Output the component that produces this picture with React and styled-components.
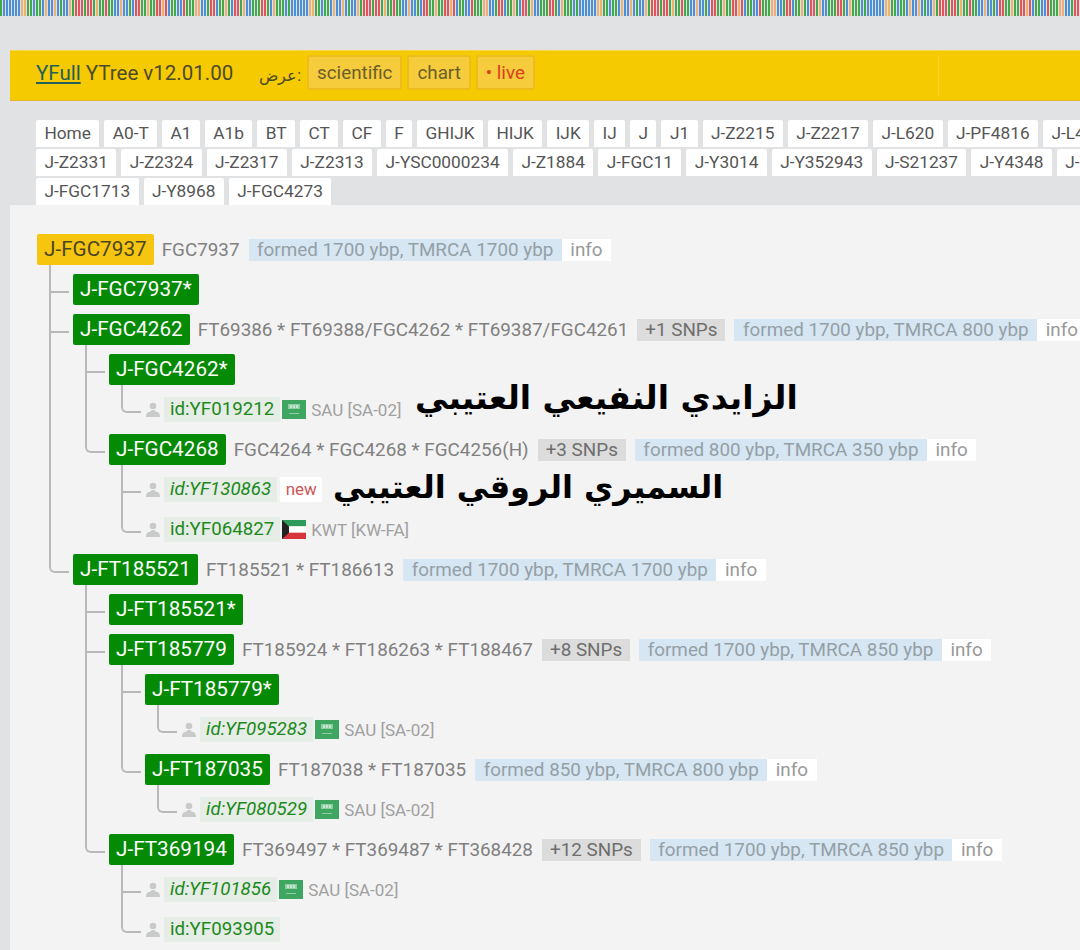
import React from 'react'
import styled, { createGlobalStyle } from 'styled-components'

const GlobalStyle = createGlobalStyle`
html, body {
    margin: 0;
    padding: 0;
    background: #e0e2e3;
    font-family: Roboto, "Liberation Sans", sans-serif;
    overflow-x: hidden;
}
`

const sequence = 'GBBBBBBOOGGBGGBOBBOBGBBOGRRRGRRGOGGRGGBBOBBGBRRGGOGGRRORBGGBBRGGGOOBBGRRBGGOGBRRGOBBGGGRRGBOGGGB'
const stripeColors = { B: '#4a8fd8', G: '#43a84a', R: '#e0545a', O: '#efae72' }
const stripes = sequence.split('').map((c, i) => (
    `${stripeColors[c]} ${i * 3}px ${i * 3 + 2}px, #e0e2e3 ${i * 3 + 2}px ${i * 3 + 3}px`
)).join(', ')

const Page = styled.div`
position: relative;
width: 1080px;
height: 950px;
overflow: hidden;
`

const Strip = styled.div`
height: 16px;
background: repeating-linear-gradient(90deg, ${stripes});
`

const Header = styled.header`
margin: 34px 0 0 10px;
height: 51px;
box-sizing: border-box;
background: #f6ca00;
border-top: 1px solid #f7d64a;
border-bottom: 1px solid #e2b430;
display: flex;
align-items: center;
padding: 0 0 6px 26px;
color: #4d4a2a;
font-size: 20.5px;
`

const Title = styled.div`
margin-right: 26px;
a {
    color: #22605c;
    text-decoration: underline;
}
`

const ViewLabel = styled.span`
font-size: 16px;
margin: 5px 6px 0 0;
`

const ViewButton = styled.span`
height: 35px;
box-sizing: border-box;
display: flex;
align-items: center;
padding: 0 8px;
margin-right: 5px;
font-size: 18.8px;
background: #f6cb3c;
border: 2px solid #eebc1c;
border-radius: 3px;
color: ${props => (props.live ? '#d8401c' : '#6b5f2a')};
`

const HeaderDivider = styled.span`
margin: 6px 141px 0 auto;
width: 1px;
height: 41px;
background: #f8d428;
`

const Nav = styled.nav`
display: flex;
flex-wrap: wrap;
gap: 1.5px 5px;
width: 1140px;
padding: 19px 0 0 36px;
height: 85px;
box-sizing: content-box;
`

const Pill = styled.span`
height: 27px;
box-sizing: border-box;
background: #fff;
border-radius: 2px 2px 0 0;
padding: 0 8.4px;
font-size: 17.3px;
line-height: 27px;
color: #555;
white-space: nowrap;
`

const Content = styled.main`
margin-left: 10px;
background: #f3f3f3;
padding: 29px 0 0 27px;
height: 745px;
box-sizing: border-box;
`

const Row = styled.div`
display: flex;
align-items: center;
height: 31px;
white-space: nowrap;
`

const Node = styled.span`
height: 31px;
box-sizing: border-box;
padding: 0 7px;
font-size: 20.7px;
line-height: 31px;
border-radius: 2px;
color: ${props => (props.root ? '#4a4520' : '#fff')};
background: ${props => (props.root ? '#f6c510' : '#058a05')};
margin-right: 8px;
`

const Snps = styled.span`
font-size: 18.85px;
color: #808080;
margin-right: 9px;
`

const Count = styled.span`
font-size: 18.85px;
color: #6e6e6e;
background: #dcdcdc;
padding: 0 8px;
line-height: 22px;
margin-right: 9px;
`

const Age = styled.span`
font-size: 18.85px;
color: #959fa6;
background: #d6e6f2;
padding: 0 8.5px;
line-height: 22px;
`

const Info = styled.span`
font-size: 18.85px;
color: #999;
background: #fff;
padding: 0 8.5px;
line-height: 22px;
`

const List = styled.ul`
list-style: none;
margin: 0;
padding: 0 0 0 36px;
`

const Item = styled.li`
position: relative;
margin-top: 9px;
&::before {
    content: '';
    position: absolute;
    left: -24px;
    top: -9px;
    width: 20px;
    height: 28px;
    box-sizing: border-box;
    border-left: 2px solid #b9b9b9;
    border-bottom: 2px solid #b9b9b9;
    border-bottom-left-radius: ${props => (props.last ? '6px' : '0')};
}
&::after {
    content: '';
    display: ${props => (props.last ? 'none' : 'block')};
    position: absolute;
    left: -24px;
    top: 0;
    bottom: -9px;
    width: 2px;
    background: #b9b9b9;
}
`

const PersonIcon = styled.svg`
width: 14px;
height: 15px;
margin: 0 4px 0 1px;
flex: none;
`

const Sample = styled.span`
font-size: 18.7px;
line-height: 25px;
padding: 0 6px;
background: #e6ece6;
color: #1a8a1a;
font-style: ${props => (props.fresh ? 'italic' : 'normal')};
`

const FlagIcon = styled.svg`
width: 24px;
height: 19px;
margin: 0 5px 0 2px;
flex: none;
`

const Country = styled.span`
font-size: 17px;
color: #a0a0a0;
`

const New = styled.span`
font-size: 17px;
line-height: 25px;
padding: 0 5.5px;
margin-left: 3px;
background: #fff;
color: #cc5555;
`

const Note = styled.div`
position: absolute;
left: ${props => props.left}px;
top: ${props => props.top}px;
direction: rtl;
font-family: "DejaVu Sans", sans-serif;
font-weight: bold;
font-size: ${props => props.size}px;
line-height: 44px;
color: #000;
white-space: nowrap;
`

const navPills = [
    'Home', 'A0-T', 'A1', 'A1b', 'BT', 'CT', 'CF', 'F', 'GHIJK', 'HIJK', 'IJK', 'IJ', 'J', 'J1',
    'J-Z2215', 'J-Z2217', 'J-L620', 'J-PF4816', 'J-L483',
    'J-Z2331', 'J-Z2324', 'J-Z2317', 'J-Z2313', 'J-YSC0000234', 'J-Z1884', 'J-FGC11', 'J-Y3014',
    'J-Y352943', 'J-S21237', 'J-Y4348', 'J-Y3712',
    'J-FGC1713', 'J-Y8968', 'J-FGC4273',
]

const Person = () => (
    <PersonIcon viewBox="0 0 14 15">
        <circle cx="7" cy="4" r="3.3" fill="#c9caca" />
        <path d="M5.5 8 L8.5 8 L9.5 9.6 C12 10 14 11 14 15 L0 15 C0 11 2 10 4.5 9.6 Z" fill="#c9caca" />
    </PersonIcon>
)

const SaudiFlag = () => (
    <FlagIcon viewBox="0 0 24 19">
        <rect width="24" height="19" fill="#3fa662" />
        <rect x="6" y="4" width="12" height="5" fill="#8fcda5" />
        <rect x="8" y="5" width="2" height="3" fill="#c4e5cf" />
        <rect x="11" y="5" width="2" height="3" fill="#c4e5cf" />
        <rect x="14" y="5" width="2" height="3" fill="#c4e5cf" />
        <rect x="7" y="13" width="10" height="1" fill="#8fcda5" />
    </FlagIcon>
)

const KuwaitFlag = () => (
    <FlagIcon viewBox="0 0 24 19">
        <rect width="24" height="6.4" fill="#2f9a5e" />
        <rect y="6.4" width="24" height="6.3" fill="#fff" />
        <rect y="12.7" width="24" height="6.3" fill="#d8323c" />
        <path d="M0 0 L7 6.4 L7 12.7 L0 19 Z" fill="#222" />
    </FlagIcon>
)

function Branch({ name, root, snps, count, age, last, children }) {
    const row = (
        <Row>
            <Node root={root}>{name}</Node>
            {snps && <Snps>{snps}</Snps>}
            {count && <Count>{count}</Count>}
            {age && <Age>{age}</Age>}
            {age && <Info>info</Info>}
        </Row>
    )
    const kids = children ? <List>{children}</List> : null
    if (root) {
        return <div>{row}{kids}</div>
    }
    return <Item last={last}>{row}{kids}</Item>
}

function Leaf({ id, fresh, flag, country, isNew, last }) {
    return (
        <Item last={last}>
            <Row>
                <Person />
                <Sample fresh={fresh}>id:{id}</Sample>
                {isNew && <New>new</New>}
                {flag === 'sau' && <SaudiFlag />}
                {flag === 'kwt' && <KuwaitFlag />}
                {country && <Country>{country}</Country>}
            </Row>
        </Item>
    )
}

export default function App() {
    return (
        <Page>
            <GlobalStyle />
            <Strip />
            <Header>
                <Title><a href="#yfull">YFull</a> YTree v12.01.00</Title>
                <ViewLabel>عرض:</ViewLabel>
                <ViewButton>scientific</ViewButton>
                <ViewButton>chart</ViewButton>
                <ViewButton live>• live</ViewButton>
                <HeaderDivider />
            </Header>
            <Nav>
                {navPills.map(p => <Pill key={p}>{p}</Pill>)}
            </Nav>
            <Content>
                <Branch root name="J-FGC7937" snps="FGC7937" age="formed 1700 ybp, TMRCA 1700 ybp">
                    <Branch name="J-FGC7937*" />
                    <Branch name="J-FGC4262" snps="FT69386 * FT69388/FGC4262 * FT69387/FGC4261" count="+1 SNPs" age="formed 1700 ybp, TMRCA 800 ybp">
                        <Branch name="J-FGC4262*">
                            <Leaf id="YF019212" flag="sau" country="SAU [SA-02]" last />
                        </Branch>
                        <Branch name="J-FGC4268" snps="FGC4264 * FGC4268 * FGC4256(H)" count="+3 SNPs" age="formed 800 ybp, TMRCA 350 ybp" last>
                            <Leaf id="YF130863" fresh isNew />
                            <Leaf id="YF064827" flag="kwt" country="KWT [KW-FA]" last />
                        </Branch>
                    </Branch>
                    <Branch name="J-FT185521" snps="FT185521 * FT186613" age="formed 1700 ybp, TMRCA 1700 ybp" last>
                        <Branch name="J-FT185521*" />
                        <Branch name="J-FT185779" snps="FT185924 * FT186263 * FT188467" count="+8 SNPs" age="formed 1700 ybp, TMRCA 850 ybp">
                            <Branch name="J-FT185779*">
                                <Leaf id="YF095283" fresh flag="sau" country="SAU [SA-02]" last />
                            </Branch>
                            <Branch name="J-FT187035" snps="FT187038 * FT187035" age="formed 850 ybp, TMRCA 800 ybp" last>
                                <Leaf id="YF080529" fresh flag="sau" country="SAU [SA-02]" last />
                            </Branch>
                        </Branch>
                        <Branch name="J-FT369194" snps="FT369497 * FT369487 * FT368428" count="+12 SNPs" age="formed 1700 ybp, TMRCA 850 ybp" last>
                            <Leaf id="YF101856" fresh flag="sau" country="SAU [SA-02]" />
                            <Leaf id="YF093905" last />
                        </Branch>
                    </Branch>
                </Branch>
            </Content>
            <Note left={415} top={376} size={33}>الزايدي النفيعي العتيبي</Note>
            <Note left={333} top={465} size={32}>السميري الروقي العتيبي</Note>
        </Page>
    )
}
